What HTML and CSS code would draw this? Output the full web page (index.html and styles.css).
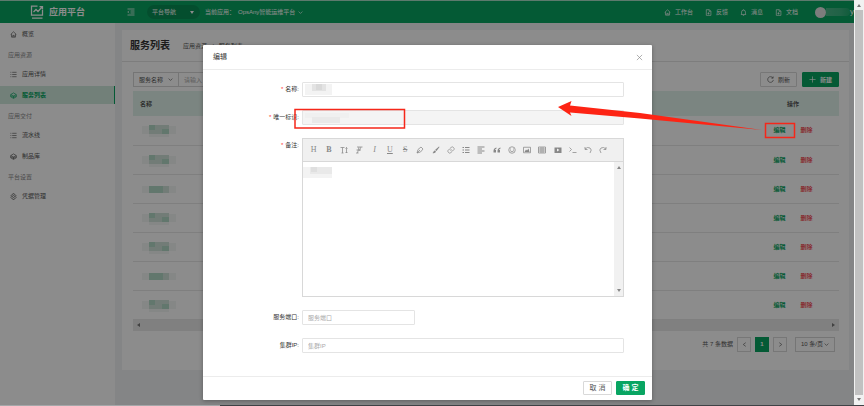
FILE: index.html
```html
<!DOCTYPE html>
<html lang="zh-CN">
<head>
<meta charset="utf-8">
<title>应用平台</title>
<link rel="stylesheet" href="styles.css">
</head>
<body>
<svg class="defs" aria-hidden="true">
  <symbol id="home" viewBox="0 0 16 16"><path d="M1.500 8 8 1.800 14.500 8M3.500 7v7h9V7M6.500 14v-4h3v4"/></symbol>
  <symbol id="list" viewBox="0 0 16 16"><path d="M5 3h10M5 8h10M5 13h10M1 3h2M1 8h2M1 13h2"/></symbol>
  <symbol id="cube" viewBox="0 0 16 16"><path d="M8 2 14.500 6v5L8 14.500 1.500 11V6zM2 6l6 3 6-3M2 9l6 3 6-3M8 9v5"/></symbol>
  <symbol id="gear" viewBox="0 0 16 16"><path d="M6.500 1.500h3l.7 2 2.200.8 1.600 2.400-1.200 1.500 1.200 1.800-1.600 2.300-2.200.6-.7 1.800h-3l-.7-1.800-2.200-.6L2 10l1.200-1.800L2 6.700l1.600-2.400 2.200-.8z"/><circle cx="8" cy="8" r="2.300"/></symbol>
  <symbol id="down" viewBox="0 0 16 16"><path d="m2 5 6 6 6-6"/></symbol>
  <symbol id="left" viewBox="0 0 16 16"><path d="M12 2 4 8l8 6"/></symbol>
  <symbol id="right" viewBox="0 0 16 16"><path d="m4 2 8 6-8 6"/></symbol>
  <symbol id="file" viewBox="0 0 16 16"><path d="M3 1.500h7l3.500 3.500v9.500H3zM9.500 2v3.500H13M5.500 10h5M8 7.500v5"/></symbol>
  <symbol id="bell" viewBox="0 0 16 16"><path d="M2 12.500h12M3.500 12V7a4.500 4.500 0 0 1 9 0v5M6.500 14.500h3M8 1v1.500"/></symbol>
  <symbol id="reload" viewBox="0 0 16 16"><path d="M13.500 4.500A6.500 6.500 0 1 0 14.500 9M14 1v4h-4"/></symbol>
  <symbol id="plus" viewBox="0 0 16 16"><path d="M8 1v14M1 8h14"/></symbol>
  <symbol id="close" viewBox="0 0 16 16"><path d="m2 2 12 12M14 2 2 14"/></symbol>
  <symbol id="mosaic" viewBox="0 0 34 14">
    <path class="m3" d="M0 3h7v8H0zM27 3h7v8h-7zM7 11h20v3H7z"/><path class="m2" d="M7 2h20v9H7z"/><path class="m1" d="M7 2h6v5H7zM20 6h7v5h-7z"/>
  </symbol>
  <symbol id="mosaic-b" viewBox="0 0 34 14">
    <path class="m3" d="M0 4h7v7H0zM27 4h7v7h-7z"/><path class="m2" d="M7 4h20v7H7z"/><path class="m1" d="M7 4h7v7H7zM14 4h7v7h-7z"/>
  </symbol>
</svg>

<div class="window">
  <div class="app">
    <header class="topbar">
      <div class="brand">
        <svg class="logo" viewBox="0 0 28 30"><path d="M15 2H3v18h22V10M7 14l5-5 4 4 8-9M19 3h6v6M4 26h21"/></svg>
        <span>应用平台</span>
      </div>
      <svg class="icon toggle" viewBox="0 0 16 16"><path d="M1 2h14M7 6h8M7 10h8M1 14h14M4 5.500 1.500 8 4 10.500"/></svg>
      <button class="nav-pill" type="button">平台导航<i class="caret"></i></button>
      <span class="current">当前应用：</span>
      <button class="app-pick" type="button">OpsAny智能运维平台<svg class="tiny"><use href="#down"/></svg></button>
      <nav class="toplinks">
        <a href="#"><svg class="icon"><use href="#home"/></svg>工作台</a>
        <a href="#"><svg class="icon"><use href="#file"/></svg>反馈</a>
        <a href="#"><svg class="icon"><use href="#bell"/></svg>消息</a>
        <a href="#"><svg class="icon"><use href="#file"/></svg>文档</a>
      </nav>
      <span class="user"><i class="avatar"></i><i class="user-name"></i>y</span>
    </header>

    <div class="body">
      <nav class="sidebar">
        <a class="item" href="#"><svg class="icon"><use href="#home"/></svg>概览</a>
        <h2>应用资源</h2>
        <a class="item" href="#"><svg class="icon"><use href="#list"/></svg>应用详情</a>
        <a class="item active" href="#"><svg class="icon"><use href="#cube"/></svg>服务列表</a>
        <h2>应用交付</h2>
        <a class="item" href="#"><svg class="icon"><use href="#list"/></svg>流水线</a>
        <a class="item" href="#"><svg class="icon"><use href="#cube"/></svg>制品库</a>
        <h2>平台设置</h2>
        <a class="item" href="#"><svg class="icon"><use href="#gear"/></svg>凭据管理</a>
      </nav>

      <main class="main">
        <section class="card">
          <div class="card-head">
            <h1>服务列表</h1>
            <div class="crumbs"><span>应用资源</span><span>/</span><span>服务列表</span></div>
          </div>
          <div class="card-body">
            <div class="filters">
              <label class="picker"><select aria-label="搜索字段"><option>服务名称</option></select><svg class="tiny"><use href="#down"/></svg></label>
              <input class="search" type="text" placeholder="请输入" aria-label="搜索">
              <button class="btn" type="button"><svg class="icon"><use href="#reload"/></svg>刷新</button>
              <button class="btn primary" type="button"><svg class="icon"><use href="#plus"/></svg>新建</button>
            </div>
            <table class="table">
              <thead><tr><th>名称</th><th class="ops">操作</th></tr></thead>
              <tbody>
                <tr><td><svg class="mosaic"><use href="#mosaic"/></svg></td><td class="ops"><a href="#">编辑</a><a class="del" href="#">删除</a></td></tr>
                <tr><td><svg class="mosaic"><use href="#mosaic"/></svg></td><td class="ops"><a href="#">编辑</a><a class="del" href="#">删除</a></td></tr>
                <tr><td><svg class="mosaic"><use href="#mosaic-b"/></svg></td><td class="ops"><a href="#">编辑</a><a class="del" href="#">删除</a></td></tr>
                <tr><td><svg class="mosaic"><use href="#mosaic"/></svg></td><td class="ops"><a href="#">编辑</a><a class="del" href="#">删除</a></td></tr>
                <tr><td><svg class="mosaic"><use href="#mosaic"/></svg></td><td class="ops"><a href="#">编辑</a><a class="del" href="#">删除</a></td></tr>
                <tr><td><svg class="mosaic"><use href="#mosaic-b"/></svg></td><td class="ops"><a href="#">编辑</a><a class="del" href="#">删除</a></td></tr>
                <tr><td><svg class="mosaic"><use href="#mosaic"/></svg></td><td class="ops"><a href="#">编辑</a><a class="del" href="#">删除</a></td></tr>
              </tbody>
            </table>
            <div class="hscroll"><i class="tri to-left"></i><i class="tri to-right"></i></div>
            <div class="pager">
              <span>共 7 条数据</span>
              <button type="button" aria-label="上一页"><svg class="tiny"><use href="#left"/></svg></button>
              <button class="on" type="button">1</button>
              <button type="button" aria-label="下一页"><svg class="tiny"><use href="#right"/></svg></button>
              <label class="picker size"><select aria-label="每页条数"><option>10 条/页</option></select><svg class="tiny"><use href="#down"/></svg></label>
            </div>
          </div>
        </section>
      </main>
    </div>

    <div class="mask">
      <div class="modal" role="dialog" aria-labelledby="dlg">
        <div class="modal-head"><h2 id="dlg">编辑</h2><button type="button" aria-label="关闭"><svg class="icon"><use href="#close"/></svg></button></div>
        <form class="form">
          <label class="req" for="name">名称:</label>
          <div class="field"><input id="name" type="text"><svg class="blot" viewBox="0 0 30 13"><path fill="#f3f3f3" d="M0 1h27v11H0z"/><path fill="#e3e3e3" d="M7 1h14v7H7z"/><path fill="#d9d9d9" d="M11 1h6v6h-6z"/></svg></div>
          <label class="req" for="key">唯一标识:</label>
          <div class="field"><input id="key" type="text" disabled><svg class="blot wide" viewBox="0 0 44 13"><path fill="#f0f0f0" d="M0 2h44v5H0z"/><path fill="#e9e9e9" d="M7 6h28v6H7z"/></svg></div>
          <label class="req" for="note">备注:</label>
          <div class="editor">
            <div class="tools">
              <button type="button">H</button>
              <button type="button"><b>B</b></button>
              <button type="button" aria-label="字号"><svg class="icon" viewBox="0 0 16 16"><path d="M1 3h8M5 3v11M3 14h4M13 3v11M11 5l2-2 2 2M11 12l2 2 2-2"/></svg></button>
              <button type="button" aria-label="字体"><svg class="icon" viewBox="0 0 16 16"><path d="M4 2h11M8 2 5 14M3 8h9M2 14h5M12 2 8 10"/></svg></button>
              <button type="button"><em>I</em></button>
              <button type="button"><u>U</u></button>
              <button type="button"><s>S</s></button>
              <button type="button" aria-label="文字颜色"><svg class="icon" viewBox="0 0 16 16"><path d="m2 14 2-7 6-5 4 4-5 6zM2 14l6-6"/></svg></button>
              <button type="button" aria-label="背景色"><svg class="icon" viewBox="0 0 16 16"><path class="solid" d="m14 1 1 1-6 8-3-2zM5 9l3 2c-1 3-4 4-7 3 2-1 2-4 4-5z"/></svg></button>
              <button type="button" aria-label="链接"><svg class="icon" viewBox="0 0 16 16"><path d="m7 4 2-2q2-1 4 1t1 4l-3 3q-2 1-4-1M9 12l-2 2q-2 1-4-1t-1-4l3-3q2-1 4 1"/></svg></button>
              <button type="button" aria-label="列表"><svg class="icon bold" viewBox="0 0 16 16"><path d="M6 3h9M6 8h9M6 13h9M1 3h3M1 8h3M1 13h3"/></svg></button>
              <button type="button" aria-label="对齐"><svg class="icon bold" viewBox="0 0 16 16"><path d="M1 2h14M1 6h9M1 10h14M1 14h9"/></svg></button>
              <button type="button" aria-label="引用"><svg class="icon" viewBox="0 0 16 16"><path class="solid" d="M7 3C3 4 1 6 1 10v3h5V8H4q0-2 3-3zM15 3c-4 1-6 3-6 7v3h5V8h-2q0-2 3-3z"/></svg></button>
              <button type="button" aria-label="表情"><svg class="icon" viewBox="0 0 16 16"><circle cx="8" cy="8" r="6.500"/><path d="M4 9q4 5 8 0M5 5v2M11 5v2"/></svg></button>
              <button type="button" aria-label="图片"><svg class="icon" viewBox="0 0 16 16"><path d="M1 2.500h14v11H1z"/><path class="solid" d="m3 12 3-5 2 2 3-4 2 7z"/></svg></button>
              <button type="button" aria-label="表格"><svg class="icon" viewBox="0 0 16 16"><path d="M1 2h14v12H1zM1 6h14M1 10h14M6 2v12M10 2v12"/></svg></button>
              <button type="button" aria-label="视频"><svg class="icon" viewBox="0 0 16 16"><path class="solid" fill-rule="evenodd" d="M1 3h14v11H1zM6 5v6l5-3z"/></svg></button>
              <button type="button" aria-label="代码"><svg class="icon" viewBox="0 0 16 16"><path d="m1 3 4 4-4 4M7 13h8"/></svg></button>
              <button type="button" aria-label="撤销"><svg class="icon" viewBox="0 0 16 16"><path d="M2 2v5h5M2 6q5-5 10-2t0 10"/></svg></button>
              <button type="button" aria-label="重做"><svg class="icon" viewBox="0 0 16 16"><path d="M14 2v5H9M14 6Q9 1 4 4t0 10"/></svg></button>
            </div>
            <div class="pad"><textarea id="note"></textarea><div class="vscroll"><i class="tri to-up"></i><i class="tri to-down"></i></div>
              <svg class="blot note" viewBox="0 0 30 13"><path fill="#f3f3f3" d="M0 1h29v11H0z"/><path fill="#e9e9e9" d="M7 1h22v7H7z"/><path fill="#dfdfdf" d="M8 1h6v5H8z"/></svg></div>
          </div>
          <label for="port">服务端口:</label>
          <div class="field short"><input id="port" type="text" placeholder="服务端口"></div>
          <label for="ip">集群IP:</label>
          <div class="field"><input id="ip" type="text" placeholder="集群IP"></div>
        </form>
        <div class="modal-foot"><button class="btn" type="button">取 消</button><button class="btn primary" type="button">确 定</button></div>
      </div>
    </div>
  </div>
  <div class="page-scroll"><i class="tri to-up"></i><i class="thumb"></i><i class="tri to-down"></i></div>
</div>
<div class="taskbar"></div>
<svg class="marks" viewBox="0 0 864 406" aria-hidden="true">
  <path class="box" d="M295 109.500h109.500v18.500H295zM765.500 123.500h29v14h-29z"/>
  <path class="arrow" d="m558 107 13.500-6-1.500 4.500L640 113l122 17-122-11.500-70-6 1.500 3.500z"/>
</svg>
</body>
</html>
```
FILE: styles.css
```css
:root {
  --green: #09a562;
  --line: #e4e4e4;
  --text: #555;
}
* { box-sizing: border-box; }
body {
  margin: 0;
  height: 100vh;
  display: flex;
  flex-direction: column;
  position: relative;
  overflow: hidden;
  font: 6px/10px "Liberation Sans", "Noto Sans CJK SC", sans-serif;
  color: var(--text);
}
button, input, select, textarea { font: inherit; color: inherit; margin: 0; padding: 0; border: 0; background: none; }
a { color: inherit; text-decoration: none; }
h1, h2 { margin: 0; font: inherit; }
svg { fill: none; stroke: currentColor; flex: none; display: block; }
.defs { position: absolute; width: 0; height: 0; }
.icon { width: 7px; height: 7px; stroke-width: 1.500; }
.tiny { width: 5px; height: 5px; stroke-width: 2; }
.solid { fill: currentColor; stroke: none; }

.window { flex: 1; min-height: 0; display: flex; }
.app { flex: 1; min-width: 0; position: relative; display: flex; flex-direction: column; border-top: 1px solid #a9dfc6; }

.topbar { height: 22px; flex: none; display: flex; align-items: center; background: var(--green); color: #fff; }
.brand { width: 127px; padding-left: 30px; display: flex; align-items: center; gap: 5px; font-size: 9px; font-weight: bold; }
.logo { width: 14px; height: 15px; stroke-width: 2.500; }
.toggle { width: 8px; height: 8px; }
.nav-pill { height: 14px; margin-left: 12px; padding: 0 6px 0 5px; width: 53px; border-radius: 7px; background: #088f55; display: flex; align-items: center; justify-content: space-between; }
.caret { border: 2px solid transparent; border-top: 3px solid #fff; border-bottom: 0; }
.current { margin-left: 5px; width: 33px; }
.app-pick { display: flex; align-items: center; gap: 3px; }
.toplinks { margin-left: auto; display: flex; gap: 12px; }
.toplinks a { display: flex; align-items: center; gap: 4px; }
.user { display: flex; align-items: center; margin-left: 17px; font-size: 8px; }
.avatar { width: 11px; height: 11px; border-radius: 50%; background: #e3e3e3; }
.user-name { width: 24px; height: 8px; background: linear-gradient(90deg, #4bb98a, #3bb380 60%, #1fa96e); border-radius: 0 4px 4px 0; }

.body { flex: 1; min-height: 0; display: flex; }
.sidebar { width: 115px; flex: none; padding-top: 2px; background: #fff; }
.sidebar h2 { height: 16px; line-height: 16px; margin: 4px 0 2px; padding-left: 8px; color: #888; }
.item { height: 18px; padding-left: 10px; display: flex; align-items: center; gap: 5px; }
.item + .item { margin-top: 3px; }
.item.active { background: #cfe9dc; color: var(--green); border-right: 1px solid var(--green); font-weight: bold; }

.main { flex: 1; min-width: 0; padding: 7px 5px 0 7px; background: #f0f2f5; }
.card { background: #fff; padding-bottom: 18px; }
.card-head { height: 32px; padding: 0 8px; display: flex; align-items: center; gap: 13px; border-bottom: 1px solid var(--line); }
.card-head h1 { font-size: 10px; font-weight: bold; color: #333; }
.crumbs { display: flex; gap: 5px; }
.card-body { padding: 10px 10px 0 11px; }
.filters { display: flex; height: 15px; margin-bottom: 4px; }
.picker { display: flex; align-items: center; border: 1px solid #d5d5d5; padding: 0 5px; width: 46px; }
select { appearance: none; flex: 1; min-width: 0; }
.search { border: 1px solid #d5d5d5; border-left: 0; padding-left: 5px; width: 120px; }
.search::placeholder, .field input::placeholder { color: #aaa; opacity: 1; }
.btn { display: flex; align-items: center; justify-content: center; gap: 4px; border: 1px solid #d9d9d9; background: #fff; border-radius: 1px; }
.btn.primary { background: var(--green); border-color: var(--green); color: #fff; font-weight: bold; }
.filters .btn { width: 37px; }
.filters .btn:nth-of-type(1) { margin: 0 5px 0 auto; }

.table { width: 100%; border-collapse: collapse; table-layout: fixed; }
.table th { height: 25px; padding: 0 7px; text-align: left; background: #e1f3eb; }
.table td { height: 29px; padding: 0 7px; border-bottom: 1px solid #e8e8e8; }
.table .ops { width: 92px; text-align: center; padding: 0; }
.table .ops a { color: var(--green); font-weight: bold; }
.table .ops .del { color: #f5555c; margin-left: 15px; }
.mosaic { width: 34px; height: 14px; margin-left: 2px; stroke: none; }
.m1 { fill: #b3d9c7; }
.m2 { fill: #cfe2d9; }
.m3 { fill: #f2f6f4; }

.hscroll { height: 11px; padding: 0 4px; display: flex; align-items: center; justify-content: space-between; background: #eaeaea; color: #777; }
.tri { width: 0; height: 0; border: 2px solid transparent; flex: none; }
.to-left { border-right: 3px solid; border-left: 0; }
.to-right { border-left: 3px solid; border-right: 0; }
.to-up { border-bottom: 3px solid; border-top: 0; }
.to-down { border-top: 3px solid; border-bottom: 0; }
.pager { margin-top: 6px; padding-right: 4px; display: flex; align-items: center; justify-content: flex-end; gap: 4px; }
.pager button { width: 14px; height: 15px; border: 1px solid #d9d9d9; display: flex; align-items: center; justify-content: center; }
.pager .on { background: var(--green); border-color: var(--green); color: #fff; font-weight: bold; }
.pager .size { width: 40px; height: 15px; margin-left: 4px; }

.mask { position: absolute; inset: -1px 0 0; background: rgba(0, 0, 0, .45); padding: 45px 0 0 1px; }
.modal { width: 449px; max-width: 100%; margin: 0 auto; background: #fff; border-radius: 1px; box-shadow: 0 1px 4px rgba(0, 0, 0, .3); }
.modal-head { height: 25px; padding: 0 9px 0 10px; display: flex; align-items: center; justify-content: space-between; border-bottom: 1px solid #ececec; }
.modal-head h2 { font-size: 7px; color: #333; }
.modal-head button { color: #888; }
.form { display: grid; grid-template-columns: 96px 1fr; column-gap: 3px; row-gap: 13px; padding: 12px 28px 23px 0; }
.form > label { text-align: right; line-height: 15px; color: #333; }
.req::before { content: "*"; color: #f33; margin-right: 2px; }
.field { height: 15px; position: relative; }
.field input { width: 100%; height: 100%; border: 1px solid var(--line); border-radius: 1px; padding: 0 5px; display: block; }
.field input:disabled { background: #f4f4f4; }
.field.short { width: 35%; }
.blot { position: absolute; left: 3px; top: 1px; width: 30px; height: 13px; stroke: none; }
.blot.wide { width: 44px; }
.blot.note { left: 0; top: 4px; }
.editor { border: 1px solid #d8d8d8; }
.tools { height: 23px; display: flex; align-items: center; padding: 0 12px 0 3px; background: #f0f0f0; border-bottom: 1px solid #d8d8d8; color: #888; }
.tools button { flex: 1; display: flex; justify-content: center; font: 8px/10px "Liberation Serif", serif; }
.tools .icon { width: 8px; height: 8px; }
.tools .bold { stroke-width: 2; }
.pad { height: 134px; position: relative; display: flex; }
.pad textarea { flex: 1; min-width: 0; resize: none; padding: 5px; }
.vscroll { width: 9px; padding: 4px 0; display: flex; flex-direction: column; align-items: center; justify-content: space-between; background: #f1f1f1; color: #888; }
.modal-foot { border-top: 1px solid #ececec; padding: 4px 7px 5px; display: flex; justify-content: flex-end; gap: 4px; }
.modal-foot .btn { width: 29px; height: 14px; font-size: 7px; }

.page-scroll { width: 10px; flex: none; background: #f1f1f1; color: #777; padding: 4px 1px; display: flex; flex-direction: column; align-items: center; gap: 3px; }
.thumb { flex: 1; width: 100%; background: #c1c1c1; }
.taskbar { height: 1px; flex: none; background: linear-gradient(90deg, #a5a7a9 25.500%, #3f4246 25.500%); }

.marks { position: absolute; inset: 0; width: 100%; height: 100%; pointer-events: none; }
.box { stroke: #f5271a; stroke-width: 1.500; }
.arrow { fill: #fd2414; stroke: none; }
```
